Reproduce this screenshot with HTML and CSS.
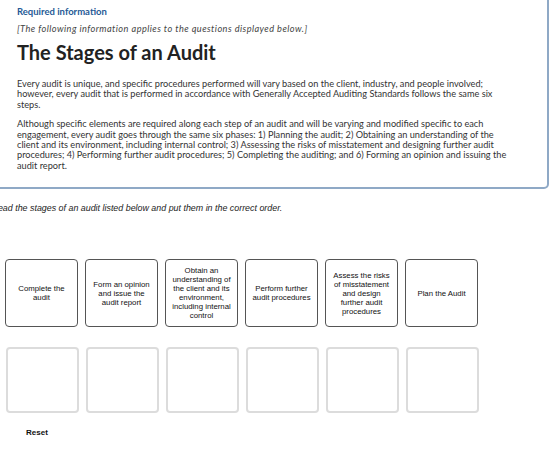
FILE: index.html
```html
<!DOCTYPE html>
<html lang="en">
<head>
  <meta charset="UTF-8" />
  <title>The Stages of an Audit</title>
  <link rel="stylesheet" href="styles.css">
</head>
<body>
  <div class="info-panel">
    <p class="req-label">Required information</p>
    <p class="req-note">[The following information applies to the questions displayed below.]</p>
    <h1>The Stages of an Audit</h1>
    <p class="info-text">Every audit is unique, and specific procedures performed will vary based on the client, industry, and people involved; however, every audit that is performed in accordance with Generally Accepted Auditing Standards follows the same six steps.</p>
    <p class="info-text">Although specific elements are required along each step of an audit and will be varying and modified specific to each engagement, every audit goes through the same six phases: 1) Planning the audit; 2) Obtaining an understanding of the client and its environment, including internal control; 3) Assessing the risks of misstatement and designing further audit procedures; 4) Performing further audit procedures; 5) Completing the auditing; and 6) Forming an opinion and issuing the audit report.</p>
  </div>

  <p class="instructions">Read the stages of an audit listed below and put them in the correct order.</p>

  <div class="card-row">
    <div class="card">Complete the audit</div>
    <div class="card">Form an opinion and issue the audit report</div>
    <div class="card">Obtain an understanding of the client and its environment, including internal control</div>
    <div class="card">Perform further audit procedures</div>
    <div class="card">Assess the risks of misstatement and design further audit procedures</div>
    <div class="card">Plan the Audit</div>
  </div>

  <div class="drop-row">
    <div class="drop"></div>
    <div class="drop"></div>
    <div class="drop"></div>
    <div class="drop"></div>
    <div class="drop"></div>
    <div class="drop"></div>
  </div>

  <button class="reset-btn">Reset</button>
</body>
</html>
```

FILE: styles.css
```css
body {
  margin: 0;
  background: #fff;
  color: #222;
  font-family: 'Lato', 'Liberation Sans', sans-serif;
  overflow: hidden;
}

.info-panel {
  margin: -10px 11px 0 -10px;
  padding: 14px 34px 16px 25px;
  border: 2px solid #8fa9c6;
  border-radius: 0 0 5px 5px;
  background: #fff;
}

.req-label {
  margin: 0;
  font-size: 9.5px;
  font-weight: bold;
  color: #1f5a96;
}

.req-note {
  margin: 6px 0 0;
  font-size: 9.2px;
  font-style: italic;
  letter-spacing: 0.45px;
  color: #444;
}

h1 {
  margin: 6px 0 15px;
  font-size: 20px;
  font-weight: bold;
  color: #222;
}

.info-text {
  margin: 0 0 9px;
  font-size: 9.2px;
  line-height: 10.4px;
  color: #333;
}

.info-text:last-child {
  margin-bottom: 0;
}

.instructions {
  margin: 14px 0 0 -8.5px;
  font-family: 'Liberation Sans', Arial, sans-serif;
  font-size: 8.9px;
  font-style: italic;
  color: #222;
}

.card-row,
.drop-row {
  display: flex;
  gap: 7px;
  margin-left: 5px;
}

.card-row {
  margin-top: 46px;
}

.card {
  box-sizing: border-box;
  width: 73px;
  height: 68px;
  padding: 2px 5px;
  border: 1px solid #555;
  border-radius: 4px;
  display: flex;
  align-items: center;
  justify-content: center;
  text-align: center;
  font-family: 'Liberation Sans', Arial, sans-serif;
  font-size: 7.8px;
  line-height: 9px;
  color: #111;
}

.drop-row {
  margin-top: 20px;
  margin-left: 6px;
}

.drop {
  box-sizing: border-box;
  width: 73px;
  height: 66px;
  border: 2px solid #dcdcdc;
  border-radius: 4px;
}

.reset-btn {
  display: block;
  margin: 13px 0 0 21px;
  padding: 2px 5px;
  border: none;
  background: none;
  font-family: 'Liberation Sans', Arial, sans-serif;
  font-size: 8px;
  font-weight: bold;
  color: #111;
  cursor: pointer;
}
```
